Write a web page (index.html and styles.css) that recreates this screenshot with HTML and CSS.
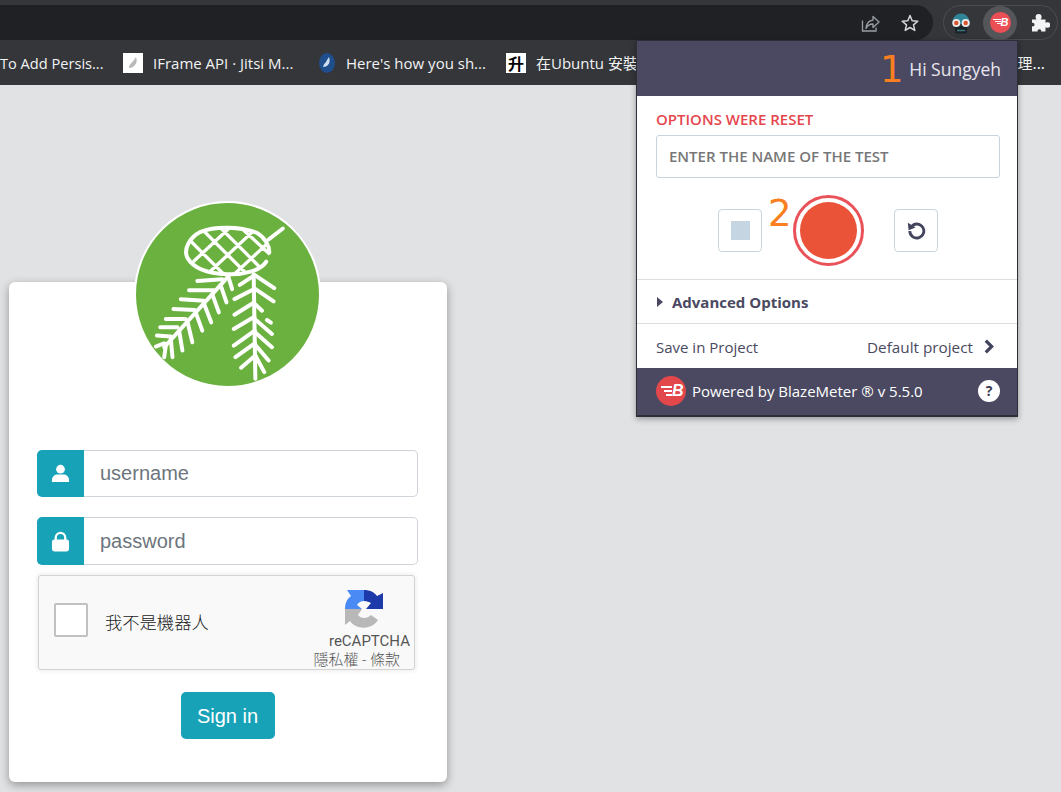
FILE: index.html
```html
<!DOCTYPE html>
<html lang="en">
<head>
<meta charset="utf-8">
<title>Sign in</title>
<link rel="stylesheet" href="styles.css">
</head>
<body>
<div class="browser">
  <header class="toolbar">
    <div class="address">
      <svg class="tool-icon" viewBox="0 0 20 20"><path d="M2.500 7.500V18H16v-3.500" fill="none" stroke="#9aa0a6" stroke-width="1.300"/><path d="M6 15.500C6.500 10 9.500 7.500 13 7.200V3.500L19 9l-6 5.500V11c-3 0-5.500 1.500-7 4.500z" fill="none" stroke="#9aa0a6" stroke-width="1.300" stroke-linejoin="round"/></svg>
      <svg class="tool-icon star" viewBox="0 0 20 20"><path d="M10 2.500l2.200 5.200 5.600.5-4.300 3.700 1.300 5.500-4.800-2.900-4.800 2.900 1.300-5.500-4.300-3.700 5.600-.5z" fill="none" stroke="#d5d7da" stroke-width="1.500" stroke-linejoin="round"/></svg>
    </div>
    <div class="extensions">
      <svg class="robot" viewBox="0 0 22 22">
        <path d="M2.500 10a8.500 8.500 0 0 1 17 0v2h-17z" fill="#2f8497"/>
        <path d="M4.500 14h13l-1 7.500h-11z" fill="#17252b"/>
        <circle cx="6.300" cy="11" r="4" fill="#ececec"/><circle cx="15.700" cy="11" r="4" fill="#ececec"/>
        <circle cx="6.300" cy="11" r="2.200" fill="#d9532c"/><circle cx="15.700" cy="11" r="2.200" fill="#d9532c"/>
        <path d="M7.500 18.500h7" stroke="#6fc0d0" stroke-width="1.400" stroke-dasharray="1 1"/>
      </svg>
      <div class="ext-active">
        <div class="bm-logo small"><span class="stripes"><i></i><i></i><i></i></span><b>B</b></div>
      </div>
      <svg class="puzzle" viewBox="0 0 20 20"><path d="M2 6.500h4.500C5.800 5.500 5.600 4.800 5.600 4a3 3 0 0 1 6 0c0 .8-.2 1.500-.9 2.500H15.500v3.300c1-.5 1.500-.6 2-.6a2.800 2.800 0 0 1 0 5.600c-.5 0-1-.1-2-.6v4.300H11c.3-1 .2-2-1.600-2.300-1.800.3-2 1.300-1.600 2.300H2v-5.200c1.500.5 2.500-.2 2.500-1.500S3.500 9.500 2 10z" fill="#f1f3f4"/></svg>
    </div>
  </header>
  <nav class="bookmarks">
    <span class="bm-text first">To Add Persis...</span>
    <svg class="fav" viewBox="0 0 20 20"><rect width="20" height="20" fill="#fff"/><path d="M6 15c0-4 3-5 5-8l2-3c1 3 1 6-1 8-1 2-4 3-6 3z" fill="#b9b9b9"/></svg>
    <span class="bm-text second">IFrame API · Jitsi M...</span>
    <svg class="fav narrow" viewBox="0 0 18 20"><ellipse cx="9" cy="10" rx="8" ry="10" fill="#1f4e8c"/><path d="M5 14c1-4 3-4 4-7l2-3c1 3 1 6-1 8-1 1-3 2-5 2z" fill="#cfe0f2"/></svg>
    <span class="bm-text third">Here's how you sh...</span>
    <div class="fav sheng">升</div>
    <span class="bm-text fourth">在Ubuntu 安裝</span>
    <span class="bm-text last">理...</span>
  </nav>
</div>

<main class="page">
  <section class="card">
    <div class="logo">
      <svg viewBox="45 35 552 552">
        <defs><clipPath id="cone"><path d="M240 122C280 105 360 105 410 125C435 140 448 165 447 190C440 225 370 252 320 250C270 248 220 235 200 200C188 175 205 140 240 122z"/></clipPath></defs>
        <g fill="none" stroke="#fff" stroke-width="12" stroke-linecap="round">
          <g clip-path="url(#cone)" stroke-width="10">
            <path d="M170 170L290 60M220 210L370 70M270 240L420 100M330 260L460 140M170 110L320 260M220 90L380 250M280 90L430 240M340 90L460 200"/>
          </g>
          <path d="M240 122C280 105 360 105 410 125C435 140 448 165 447 185M438 212C420 240 370 252 320 250C270 248 220 235 200 200C188 175 205 140 240 122"/>
          <path d="M445 145L488 112"/>
          <path d="M325 255L130 470"/>
          <path d="M305 265L230 270M280 298L205 298M250 330L180 325M222 358L158 355M195 385L135 385M170 410L118 410M150 438L108 435M130 458L105 468"/>
          <path d="M325 262L335 295M300 282L318 335M275 310L295 365M250 338L272 395M225 365L245 420M200 392L215 455M175 420L185 480M150 445L155 500M135 465L130 500"/>
          <path d="M400 252L405 565"/>
          <path d="M400 250L462 292M401 292L460 332M402 338L425 360M403 385L455 430M404 425L455 470M404 462L445 510M405 495L432 545"/>
          <path d="M395 258L358 282M400 295L342 325M401 335L342 372M402 378L340 415M403 420L340 465M404 458L345 500M405 495L362 532"/>
          <path d="M440 388L452 396"/>
        </g>
      </svg>
    </div>
    <form class="form">
      <div class="field">
        <span class="addon">
          <svg viewBox="0 0 20 20"><circle cx="10" cy="5.500" r="4.600" fill="#fff"/><path d="M1 19v-2c0-4 3-6 6-6h6c3 0 6 2 6 6v2z" fill="#fff"/></svg>
        </span>
        <span class="control">username</span>
      </div>
      <div class="field tall">
        <span class="addon">
          <svg viewBox="0 0 20 22"><path d="M5 10V7a5 5 0 0 1 10 0v3" fill="none" stroke="#fff" stroke-width="2.400"/><rect x="1" y="9" width="18" height="12.500" rx="2.500" fill="#fff"/></svg>
        </span>
        <span class="control">password</span>
      </div>
      <div class="captcha">
        <span class="check"></span>
        <span class="robot-label">我不是機器人</span>
        <div class="brand">
          <svg viewBox="0 0 38 38">
            <path d="M0 19C0 13 2 9 6 6L2 0H19V11C16 11 14 12 12 15L17 19z" fill="#4a8af4"/>
            <path d="M19 0C25 0 29 2 32 6L38 3V19H21L26 13C24 12 22 11 19 11z" fill="#1c3aa9"/>
            <path d="M0 19H17L13 25C16 29 22 29 26 25L33 30C27 40 11 40 5 31L0 35z" fill="#b8b8b8"/>
          </svg>
          <span class="brand-name">reCAPTCHA</span>
          <span class="brand-links">隱私權 - 條款</span>
        </div>
      </div>
      <button class="signin" type="button">Sign in</button>
    </form>
  </section>
</main>

<aside class="popup">
  <div class="pop-head"><span class="mark mark-one">1</span><span class="hi">Hi Sungyeh</span></div>
  <div class="pop-main">
    <div class="alert">OPTIONS WERE RESET</div>
    <div class="name-input">ENTER THE NAME OF THE TEST</div>
    <div class="controls">
      <div class="ctl"><span class="stop"></span></div>
      <div class="record-wrap">
        <span class="mark mark-two">2</span>
        <div class="record"><span></span></div>
      </div>
      <div class="ctl">
        <svg viewBox="0 0 20 20"><path d="M3.800 10A7 7 0 1 0 6 4.900" fill="none" stroke="#42435c" stroke-width="2.800"/><path d="M1.800 1.800l.8 7.400 7-2.600z" fill="#42435c"/></svg>
      </div>
    </div>
  </div>
  <div class="adv">
    <svg class="caret" viewBox="0 0 6 10"><path d="M0 0l6 5-6 5z" fill="#4a4961"/></svg>
    <span>Advanced Options</span>
  </div>
  <div class="save">
    <span>Save in Project</span>
    <span class="project">Default project
      <svg viewBox="0 0 10 14"><path d="M2 1.500L7.500 7 2 12.500" fill="none" stroke="#42435c" stroke-width="3"/></svg>
    </span>
  </div>
  <footer class="pop-foot">
    <div class="bm-logo"><span class="stripes"><i></i><i></i><i></i></span><b>B</b></div>
    <span class="powered">Powered by BlazeMeter ® v 5.5.0</span>
    <span class="help">?</span>
  </footer>
</aside>
</body>
</html>
```

FILE: styles.css
```css
* { box-sizing: border-box; }
html, body { margin: 0; height: 792px; overflow: hidden; }
body { background: #e1e2e4; font-family: "Open Sans", sans-serif; position: relative; }

.browser { background: #35363a; height: 85px; overflow: hidden; }
.toolbar { display: flex; height: 40px; padding-top: 5px; }
.address { width: 933px; height: 35px; background: #202124; border-radius: 0 18px 18px 0; display: flex; align-items: center; justify-content: flex-end; padding-right: 13px; gap: 20px; }
.tool-icon { width: 20px; height: 20px; }
.extensions { margin-left: 10px; width: 115px; height: 35px; border: 1px solid #4c4d52; border-radius: 18px; display: flex; align-items: center; padding-left: 6px; }
.robot { width: 22px; height: 22px; }
.ext-active { width: 34px; height: 34px; border-radius: 50%; background: #55565a; display: flex; align-items: center; justify-content: center; margin-left: 11px; }
.puzzle { width: 20px; height: 20px; margin-left: 13px; }

.bookmarks { height: 45px; padding-top: 1px; display: flex; align-items: center; color: #f1f3f4; font-size: 15px; white-space: nowrap; position: relative; }
.bm-text { display: block; line-height: 44px; }
.first { width: 123px; font-size: 14.600px; }
.second { width: 143px; margin-left: 10px; }
.third { width: 139px; margin-left: 12px; }
.fourth { margin-left: 10px; font-family: "Open Sans", "Noto Sans CJK TC", sans-serif; }
.last { position: absolute; right: 16px; top: 1px; font-family: "Noto Sans CJK TC", sans-serif; }
.fav { width: 20px; height: 20px; flex: none; }
.fav.narrow { width: 18px; margin-left: 22px; }
.fav.narrow + .third { margin-left: 10px; }
.sheng { background: #fff; color: #000; font: 700 16px/20px "Noto Sans CJK TC", sans-serif; text-align: center; margin-left: 21px; }

.page { padding: 197px 0 0 9px; }
.card { display: flow-root; width: 438px; height: 500px; background: #fff; border-radius: 6px; box-shadow: 0 3px 10px rgba(0, 0, 0, .35); padding: 0 29px 0 28px; }
.logo { width: 187px; height: 187px; margin: -81px auto 0; border-radius: 50%; background: #6bb140; border: 2px solid #fff; }
.logo svg { display: block; width: 183px; height: 183px; }

.form { margin-top: 62px; font-family: "Liberation Sans", sans-serif; }
.field { display: flex; height: 47px; margin-bottom: 20px; }
.field.tall { height: 48px; margin-bottom: 10px; }
.addon { width: 47px; background: #17a2b8; border-radius: 5px 0 0 5px; display: flex; align-items: center; justify-content: center; }
.addon svg { width: 19px; height: 21px; }
.control { flex: 1; border: 1px solid #ced4da; border-left: 0; border-radius: 0 5px 5px 0; background: #fff; color: #6c757d; font-size: 20px; line-height: 45px; padding-left: 16px; }
.tall .control { line-height: 47px; }

.captcha { width: 377px; height: 95px; margin-left: 1px; background: #f9f9f9; border: 1px solid #d3d3d3; border-radius: 3px; box-shadow: 0 0 4px 1px rgba(0, 0, 0, .08); display: flex; align-items: center; position: relative; padding: 0 0 5px 15px; }
.check { width: 34px; height: 34px; border: 2px solid #c1c1c1; border-radius: 2px; background: #fff; }
.robot-label { margin: 3px 0 0 17px; font: 300 17.300px "Noto Sans CJK TC", sans-serif; color: #222; }
.brand { position: absolute; right: 0; top: 0; width: 110px; height: 93px; font-family: Roboto, "Noto Sans CJK TC", sans-serif; color: #555; text-align: right; }
.brand svg { position: absolute; top: 14px; left: 41px; width: 38px; height: 38px; }
.brand-name { position: absolute; right: 4px; top: 56px; font-size: 15px; line-height: 18px; }
.brand-links { position: absolute; right: 14px; top: 75px; font-size: 15px; font-weight: 300; line-height: 18px; color: #555; white-space: nowrap; }

.signin { display: block; margin: 22px auto 0; width: 94px; height: 47px; background: #17a2b8; color: #fff; border: 0; border-radius: 5px; font: 20px "Liberation Sans", sans-serif; padding: 1px 0 0; }

.popup { position: absolute; left: 636px; top: 40px; width: 382px; height: 377px; background: #fff; border: 1px solid #2e2e38; border-bottom-width: 2px; box-shadow: 0 2px 6px rgba(0, 0, 0, .35); color: #4a4961; font-size: 15px; display: flex; flex-direction: column; }
.pop-head { height: 55px; background: #4a4961; display: flex; align-items: center; justify-content: flex-end; padding-right: 16px; position: relative; }
.hi { color: #e9e5ee; font-size: 17.500px; }
.mark { position: absolute; color: #f97f20; font-family: "DejaVu Sans", sans-serif; font-size: 37px; line-height: 37px; }
.mark-one { left: 243px; top: 10px; }
.mark-two { left: -25px; top: 0; }

.pop-main { height: 184px; border-bottom: 1px solid #dedede; padding: 13px 17px 0 19px; }
.alert { color: #e5464d; font-weight: 600; line-height: 20px; }
.name-input { height: 43px; margin-top: 6px; border: 1px solid #c6d5e0; border-radius: 3px; color: #777; font-weight: 600; line-height: 41px; padding-left: 12px; }
.controls { display: flex; justify-content: center; align-items: center; margin-top: 17px; }
.ctl { width: 44px; height: 43px; border: 1px solid #c6d5e0; border-radius: 4px; display: flex; align-items: center; justify-content: center; }
.ctl svg { width: 20px; height: 20px; }
.stop { width: 19px; height: 19px; background: #c5d6e2; }
.record-wrap { position: relative; margin: 0 30px 0 31px; }
.record { width: 71px; height: 71px; border-radius: 50%; border: 3px solid #ea525a; padding: 4px; }
.record span { display: block; height: 100%; border-radius: 50%; background: #ea5338; }

.adv { height: 44px; border-bottom: 1px solid #dedede; display: flex; align-items: center; padding-left: 20px; font-weight: 700; }
.caret { width: 6px; height: 10px; margin-right: 9px; }
.save { height: 44px; display: flex; align-items: center; justify-content: space-between; padding: 1px 22px 0 19px; }
.project { display: flex; align-items: center; gap: 10px; font-weight: 500; font-size: 15.300px; }
.project svg { width: 12px; height: 15px; }
.pop-foot { flex: 1; background: #4a4961; display: flex; align-items: center; padding: 0 17px 2px 19px; color: #fff; }
.powered { margin-left: 6px; flex: 1; }
.help { width: 22px; height: 22px; border-radius: 50%; background: #fff; color: #3c3c50; font-weight: 700; font-size: 14px; line-height: 22px; text-align: center; }

.bm-logo { width: 30px; height: 30px; border-radius: 50%; background: #e2474b; color: #fff; position: relative; font-size: 16px; font-family: "Liberation Sans", sans-serif; font-style: italic; flex: none; }
.bm-logo b { position: absolute; left: 16px; top: 6px; line-height: 18px; }
.stripes { position: absolute; left: 4px; top: 10px; width: 12px; display: flex; flex-direction: column; align-items: flex-end; gap: 2px; }
.stripes i { display: block; height: 2px; background: #fff; width: 11px; }
.stripes i:nth-child(2) { width: 8px; }
.stripes i:nth-child(3) { width: 6px; }
.bm-logo.small { width: 21px; height: 21px; font-size: 11px; background: #ea4f55; }
.bm-logo.small b { left: 11px; top: 4px; line-height: 13px; }
.small .stripes { left: 3px; top: 7px; width: 8px; gap: 1px; }
.small .stripes i { height: 1px; width: 8px; }
.small .stripes i:nth-child(2) { width: 6px; }
.small .stripes i:nth-child(3) { width: 4px; }
```
